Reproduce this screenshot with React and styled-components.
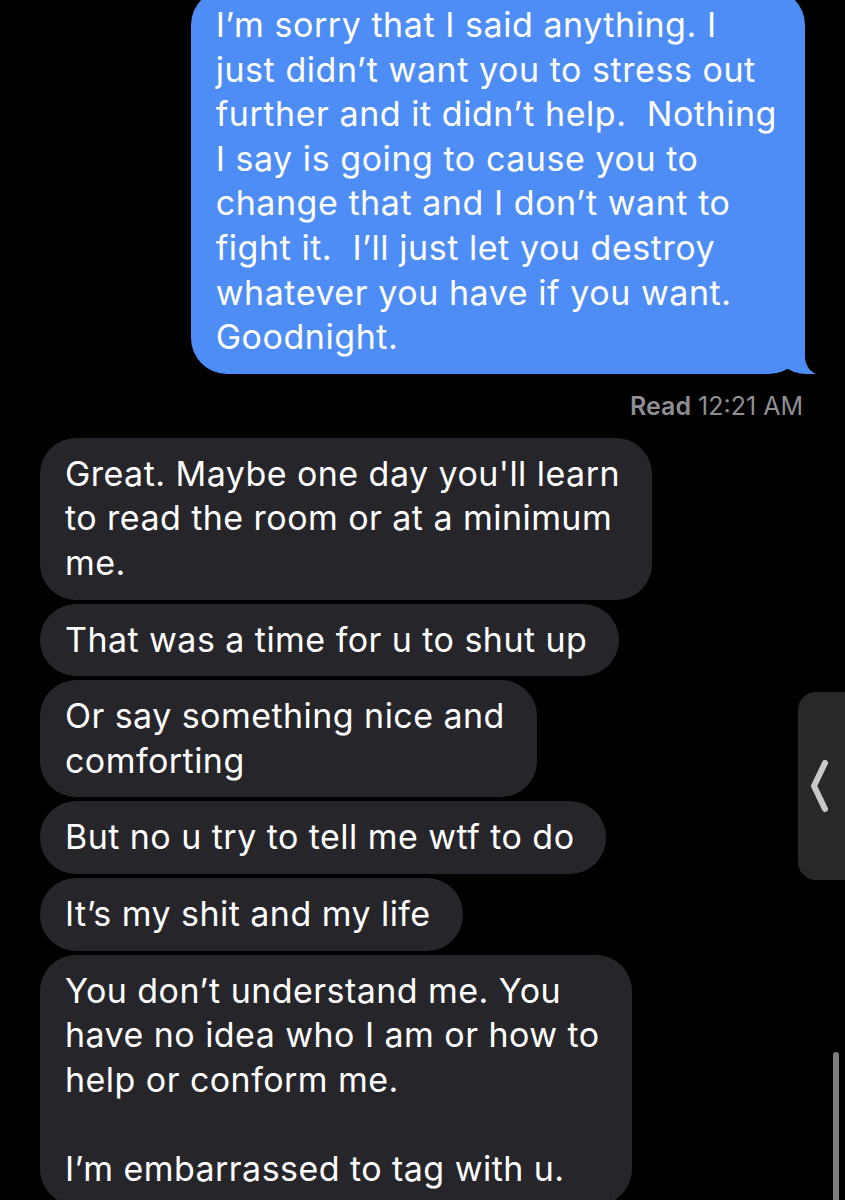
import React from "react";
import styled, { createGlobalStyle } from "styled-components";

const GlobalStyle = createGlobalStyle`
  html, body {
    margin: 0;
    padding: 0;
    background: #000;
  }
`;

const Screen = styled.div`
  position: relative;
  width: 845px;
  height: 1200px;
  overflow: hidden;
  background: #000;
  font-family: Inter, "Noto Sans", sans-serif;
  -webkit-font-smoothing: antialiased;
`;

const Thread = styled.div`
  display: flex;
  flex-direction: column;
  align-items: flex-start;
  padding: 0 40px;
`;

const Bubble = styled.div`
  position: relative;
  white-space: pre;
  color: #fff;
  font-size: 34px;
  line-height: 44.6px;
  letter-spacing: 0.45px;
  border-radius: 36px;
  padding: 14px 32px 14px 25px;
  background: #26252a;
`;

const OutgoingBubble = styled(Bubble)`
  align-self: flex-end;
  margin-top: -11px;
  padding-right: 28px;
  letter-spacing: 0.55px;
  background: #4f8df6;

  &::before {
    content: "";
    position: absolute;
    bottom: 0;
    right: -10px;
    width: 40px;
    height: 38px;
    background: #4f8df6;
    border-bottom-left-radius: 30px 28px;
  }

  &::after {
    content: "";
    position: absolute;
    bottom: 0;
    right: -22px;
    width: 22px;
    height: 40px;
    background: #000;
    border-bottom-left-radius: 14px 18px;
  }
`;

const IncomingGroup = styled.div`
  display: flex;
  flex-direction: column;
  align-items: flex-start;
  gap: 4px;
  margin-top: 17px;
`;

const Receipt = styled.div`
  align-self: flex-end;
  margin-top: 17px;
  margin-right: 2px;
  font-size: 25px;
  line-height: 30px;
  color: #8e8e93;
`;

const ReceiptLabel = styled.span`
  font-weight: 600;
`;

const SideHandle = styled.div`
  position: absolute;
  top: 692px;
  right: -20px;
  width: 67px;
  height: 188px;
  border-radius: 18px;
  background: #28282a;
  display: flex;
  align-items: center;
  padding-left: 12px;
  box-sizing: border-box;
`;

const ScrollIndicator = styled.div`
  position: absolute;
  top: 1052px;
  right: 6px;
  width: 6px;
  height: 170px;
  border-radius: 3px;
  background: #7e7e80;
`;

const outgoing = [
  "I’m sorry that I said anything. I",
  "just didn’t want you to stress out",
  "further and it didn’t help.  Nothing",
  "I say is going to cause you to",
  "change that and I don’t want to",
  "fight it.  I’ll just let you destroy",
  "whatever you have if you want.",
  "Goodnight.",
];

const incoming = [
  ["Great. Maybe one day you'll learn", "to read the room or at a minimum", "me."],
  ["That was a time for u to shut up"],
  ["Or say something nice and", "comforting"],
  ["But no u try to tell me wtf to do"],
  ["It’s my shit and my life"],
  [
    "You don’t understand me. You",
    "have no idea who I am or how to",
    "help or conform me.",
    "",
    "I’m embarrassed to tag with u.",
  ],
];

export default function App() {
  return (
    <Screen>
      <GlobalStyle />
      <Thread>
        <OutgoingBubble>{outgoing.join("\n")}</OutgoingBubble>
        <Receipt>
          <ReceiptLabel>Read</ReceiptLabel> 12:21 AM
        </Receipt>
        <IncomingGroup>
          {incoming.map((lines, i) => (
            <Bubble key={i}>{lines.join("\n")}</Bubble>
          ))}
        </IncomingGroup>
      </Thread>
      <SideHandle>
        <svg width="20" height="54" viewBox="0 0 20 54" fill="none">
          <path
            d="M15 4 L4 27 L15 50"
            stroke="#c7c7cc"
            strokeWidth="6"
            strokeLinecap="round"
            strokeLinejoin="round"
          />
        </svg>
      </SideHandle>
      <ScrollIndicator />
    </Screen>
  );
}
